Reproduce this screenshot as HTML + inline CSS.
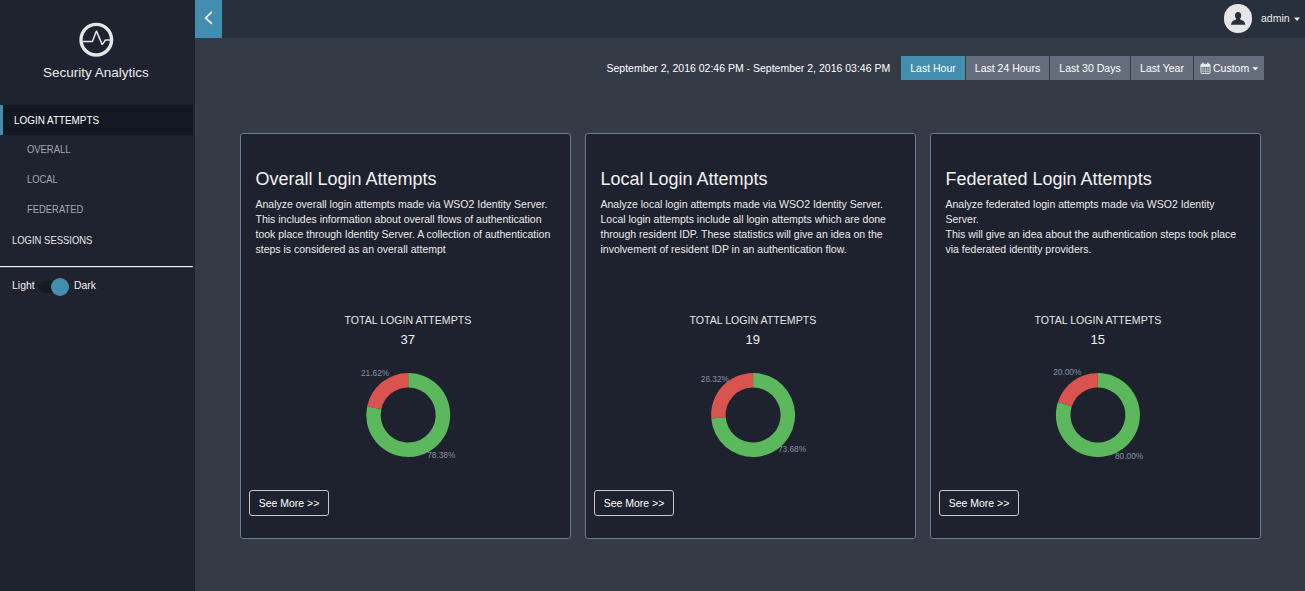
<!DOCTYPE html>
<html><head><meta charset="utf-8">
<style>
*{box-sizing:border-box;margin:0;padding:0}
html,body{width:1305px;height:591px;overflow:hidden;background:#353a47;font-family:"Liberation Sans",sans-serif;color:#fff}
.abs{position:absolute}
.t{position:absolute;white-space:nowrap;line-height:1}
#side{position:absolute;left:0;top:0;width:195px;height:591px;background:#1f232f}
#top{position:absolute;left:195px;top:0;width:1110px;height:38px;background:#29303d}
#tog{position:absolute;left:195px;top:0;width:27px;height:38px;background:#438eaf}
.hl{position:absolute;left:0;top:105px;width:193px;height:30px;background:#131823;border-left:3px solid #438eaf}
.nav{font-size:11px;color:#e6e6e6;transform-origin:0 0;transform:scaleX(0.86)}
.sub{font-size:11px;color:#a3a7ae;transform-origin:0 0;transform:scaleX(0.855)}
.btn{position:absolute;top:56px;height:24px;background:#656d7c;color:#fff;font-size:10.5px;text-align:center;line-height:24px}
.card{position:absolute;top:133px;width:331px;height:406px;background:#1e222e;border:1px solid #6b7a94;border-radius:3px}
.ct{position:absolute;left:14.5px;top:35px;font-size:18px;white-space:nowrap;color:#f2f2f2}
.cd{position:absolute;left:14.5px;top:63px;font-size:10.5px;line-height:15px;white-space:nowrap;color:#ebebeb}
.tot{position:absolute;font-size:10.6px;white-space:nowrap;color:#e6e6e6}
.num{position:absolute;font-size:13px;color:#f0f0f0}
.see{position:absolute;left:8px;top:356px;width:80px;height:26px;border:1px solid #c8c8c8;border-radius:3px;font-size:10.5px;line-height:24px;text-align:center;color:#fff}
.pl{font-size:8.3px;fill:#8891a2;font-family:"Liberation Sans",sans-serif}
</style></head>
<body>
<div id="side">
  <svg class="abs" style="left:78px;top:22px" width="36" height="36" viewBox="0 0 36 36">
    <circle cx="18.3" cy="17.7" r="15.3" fill="none" stroke="#e6e6e6" stroke-width="3.4"/>
    <polyline points="5,19.4 14.4,19.4 18.4,8.9 24.2,22.6 27.5,18 32,18" fill="none" stroke="#e6e6e6" stroke-width="1.5" stroke-linejoin="bevel"/>
  </svg>
  <div class="t" style="left:43px;top:66px;font-size:13.5px;color:#eaeaea">Security Analytics</div>
  <div class="hl"></div>
  <div class="t nav" style="left:14px;top:114.5px;color:#fff;transform:scaleX(0.9)">LOGIN ATTEMPTS</div>
  <div class="t sub" style="left:26.5px;top:144px">OVERALL</div>
  <div class="t sub" style="left:26.5px;top:174px">LOCAL</div>
  <div class="t sub" style="left:26.5px;top:204px">FEDERATED</div>
  <div class="t nav" style="left:11.5px;top:235px">LOGIN SESSIONS</div>
  <div class="abs" style="left:0;top:266px;width:193px;height:1px;background:#ececec;box-shadow:0 0.5px 0 rgba(236,236,236,0.4)"></div>
  <div class="t nav" style="left:11.5px;top:280px;transform:scaleX(0.95);color:#f4f4f4">Light</div>
  <div class="abs" style="left:39px;top:281px;width:24px;height:12px;border-radius:6px;background:#151920"></div>
  <div class="abs" style="left:51px;top:278px;width:18px;height:18px;border-radius:50%;background:#438eaf"></div>
  <div class="t nav" style="left:73.5px;top:280px;transform:scaleX(0.94);color:#f4f4f4">Dark</div>
</div>
<div id="top"></div>
<div id="tog">
  <svg class="abs" style="left:0;top:0" width="27" height="38" viewBox="0 0 27 38">
    <polyline points="16.9,11.9 10.6,17.9 16.9,23.9" fill="none" stroke="#fff" stroke-width="1.5"/>
  </svg>
</div>
<div class="abs" style="left:1223.5px;top:4.2px;width:28.6px;height:28.6px;border-radius:50%;background:#e6e6e6">
  <svg class="abs" style="left:0;top:0" width="28" height="28" viewBox="0 0 28 28">
    <ellipse cx="14.1" cy="11.6" rx="3.1" ry="3.7" fill="#29303d"/>
    <path transform="translate(0.3,0)" d="M12.3 13.6 C12.4 14.8 12.1 15.4 11.2 15.8 C8.8 16.5 7.1 17.6 6.6 20.7 H21.1 C20.6 17.6 18.9 16.5 16.5 15.8 C15.6 15.4 15.3 14.8 15.4 13.6 Z" fill="#29303d"/>
  </svg>
</div>
<div class="t" style="left:1261px;top:13px;font-size:10.5px;color:#eaeaea">admin</div>
<svg class="abs" style="left:1293px;top:17px" width="8" height="5" viewBox="0 0 8 5"><polygon points="1,0.5 7,0.5 4,4" fill="#eaeaea"/></svg>

<div class="t" style="left:606.5px;top:63px;font-size:10.5px">September 2, 2016 02:46 PM - September 2, 2016 03:46 PM</div>
<div class="btn" style="left:901px;width:64px;background:#438eaf">Last Hour</div>
<div class="btn" style="left:966px;width:83px">Last 24 Hours</div>
<div class="btn" style="left:1050px;width:80px">Last 30 Days</div>
<div class="btn" style="left:1131px;width:62px">Last Year</div>
<div class="btn" style="left:1194px;width:70px;text-align:left;padding-left:6px">
  <svg style="position:absolute;left:5.6px;top:5.8px" width="12" height="12" viewBox="0 0 12 12">
    <rect x="0.9" y="2.3" width="9.1" height="9.2" rx="0.6" fill="none" stroke="#e8eaee" stroke-width="0.9"/>
    <rect x="0.9" y="2.3" width="9.1" height="2.6" fill="#e8eaee"/>
    <rect x="2.3" y="0.4" width="1.5" height="3" rx="0.7" fill="#e8eaee"/>
    <rect x="7.2" y="0.4" width="1.5" height="3" rx="0.7" fill="#e8eaee"/>
    <path d="M3.2 4.9V11.5M5.5 4.9V11.5M7.8 4.9V11.5M0.9 7.1H10M0.9 9.3H10" stroke="#e8eaee" stroke-width="0.55" opacity="0.85"/>
  </svg>
  <span style="position:absolute;left:19px;top:0">Custom</span>
  <svg style="position:absolute;left:58px;top:11px" width="7" height="4" viewBox="0 0 7 4"><polygon points="0.3,0.3 6.3,0.3 3.3,3.3" fill="#fff"/></svg>
</div>

<!-- Card 1 -->
<div class="card" style="left:240px">
  <div class="ct">Overall Login Attempts</div>
  <div class="cd">Analyze overall login attempts made via WSO2 Identity Server.<br>This includes information about overall flows of authentication<br>took place through Identity Server. A collection of authentication<br>steps is considered as an overall attempt</div>
  <div class="tot" style="left:103.5px;top:180px">TOTAL LOGIN ATTEMPTS</div>
  <div class="num" style="left:159.5px;top:197.8px">37</div>
  <svg class="abs" style="left:0;top:0" width="331" height="406">
  </svg>
  <div class="see">See More &gt;&gt;</div>
</div>
<!-- Card 2 -->
<div class="card" style="left:585px">
  <div class="ct">Local Login Attempts</div>
  <div class="cd">Analyze local login attempts made via WSO2 Identity Server.<br>Local login attempts include all login attempts which are done<br>through resident IDP. These statistics will give an idea on the<br>involvement of resident IDP in an authentication flow.</div>
  <div class="tot" style="left:103.5px;top:180px">TOTAL LOGIN ATTEMPTS</div>
  <div class="num" style="left:159.5px;top:197.8px">19</div>
  <div class="see">See More &gt;&gt;</div>
</div>
<!-- Card 3 -->
<div class="card" style="left:930px">
  <div class="ct">Federated Login Attempts</div>
  <div class="cd">Analyze federated login attempts made via WSO2 Identity<br>Server.<br>This will give an idea about the authentication steps took place<br>via federated identity providers.</div>
  <div class="tot" style="left:103.5px;top:180px">TOTAL LOGIN ATTEMPTS</div>
  <div class="num" style="left:159.5px;top:197.8px">15</div>
  <div class="see">See More &gt;&gt;</div>
</div>
<svg class="abs" style="left:0;top:0" width="1305" height="591">
<path d="M408.20 373.00A42 42 0 1 1 367.14 406.15L381.32 409.20A27.5 27.5 0 1 0 408.20 387.50Z" fill="#5cb85c"/>
<path d="M367.14 406.15A42 42 0 0 1 408.20 373.00L408.20 387.50A27.5 27.5 0 0 0 381.32 409.20Z" fill="#d9534f"/>
<text x="361" y="375.8" class="pl">21.62%</text>
<text x="427.2" y="458" class="pl">78.38%</text>
<path d="M753.10 373.00A42 42 0 1 1 711.24 418.48L725.69 417.28A27.5 27.5 0 1 0 753.10 387.50Z" fill="#5cb85c"/>
<path d="M711.24 418.48A42 42 0 0 1 753.10 373.00L753.10 387.50A27.5 27.5 0 0 0 725.69 417.28Z" fill="#d9534f"/>
<text x="700.8" y="382" class="pl">26.32%</text>
<text x="777.9" y="452.2" class="pl">73.68%</text>
<path d="M1097.90 373.00A42 42 0 1 1 1057.96 402.02L1071.75 406.50A27.5 27.5 0 1 0 1097.90 387.50Z" fill="#5cb85c"/>
<path d="M1057.96 402.02A42 42 0 0 1 1097.90 373.00L1097.90 387.50A27.5 27.5 0 0 0 1071.75 406.50Z" fill="#d9534f"/>
<text x="1053.2" y="374.9" class="pl">20.00%</text>
<text x="1115" y="458.7" class="pl">80.00%</text>
</svg>

</body></html>
